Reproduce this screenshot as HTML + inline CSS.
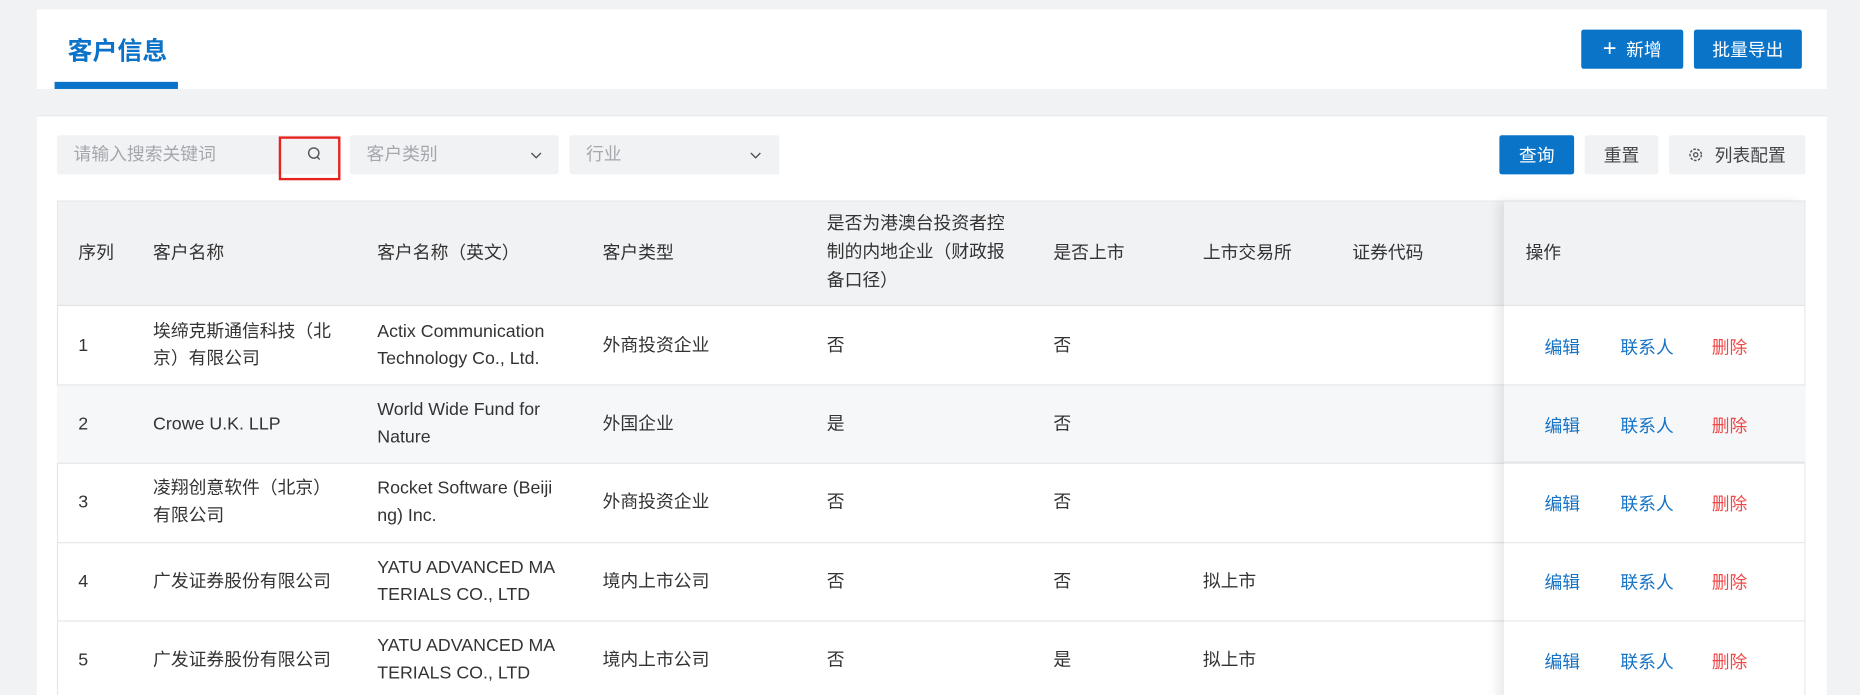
<!DOCTYPE html>
<html><head><meta charset="utf-8">
<style>
*{box-sizing:border-box;margin:0;padding:0}
html,body{width:1860px;height:695px;overflow:hidden;background:#f1f2f4}
#w{position:absolute;left:0;top:0;width:1568px;height:586px;overflow:hidden;transform:scale(1.18622);transform-origin:0 0;font-family:"Liberation Sans","Noto Sans CJK SC",sans-serif;color:#333;font-size:15px}
.a{position:absolute}
.card{background:#fff}
.btn{position:absolute;background:#0a74c9;color:#fff;border-radius:2px;display:flex;align-items:center;justify-content:center;font-size:15px}
.gb{position:absolute;background:#f1f2f4;color:#444;border-radius:2px;display:flex;align-items:center;justify-content:center;font-size:15px}
.inp{position:absolute;background:#f1f2f4;border-radius:2px;color:#a4a7ad;font-size:15px;line-height:33px;padding-left:14px}
.t{position:absolute;white-space:nowrap;line-height:23px}
.row{position:absolute;left:48px;width:1474px;border-bottom:1px solid #e4e6ea}
.lk{position:absolute;color:#1673c6}
.dl{position:absolute;color:#f04848}
</style></head><body><div id="w">
<div class="a card" style="left:31px;top:8px;width:1509px;height:67px"></div>
<div class="a" style="left:57px;top:27px;font-size:21px;font-weight:bold;color:#0a72c8">客户信息</div>
<div class="a" style="left:46px;top:69px;width:104px;height:6px;background:#0a72c8"></div>
<div class="btn" style="left:1333px;top:25px;width:86px;height:33px"><span style="font-size:20px;margin-right:8px;font-weight:300">+</span>新增</div>
<div class="btn" style="left:1428px;top:25px;width:91px;height:33px">批量导出</div>

<div class="a card" style="left:31px;top:97px;width:1509px;height:600px;border-top:1px solid #e6e8eb"></div>
<div class="inp" style="left:48px;top:114px;width:239px;height:33px">请输入搜索关键词</div>
<svg class="a" style="left:258px;top:123px" width="14" height="14" viewBox="0 0 14 14"><circle cx="6.5" cy="6" r="4.3" fill="none" stroke="#555" stroke-width="1.2"/><path d="M9.5 9.5L11.5 11.5" stroke="#555" stroke-width="1.2"/></svg>
<div class="a" style="left:235px;top:115px;width:52px;height:37px;border:2px solid #e8231f"></div>
<div class="inp" style="left:295px;top:114px;width:176px;height:33px">客户类别</div>
<svg class="a" style="left:447px;top:127px" width="10" height="8"><path d="M1 2L5 6L9 2" fill="none" stroke="#555" stroke-width="1.2"/></svg>
<div class="inp" style="left:480px;top:114px;width:177px;height:33px">行业</div>
<svg class="a" style="left:632px;top:127px" width="10" height="8"><path d="M1 2L5 6L9 2" fill="none" stroke="#555" stroke-width="1.2"/></svg>
<div class="btn" style="left:1264px;top:114px;width:63px;height:33px">查询</div>
<div class="gb" style="left:1336px;top:114px;width:62px;height:33px">重置</div>
<div class="gb" style="left:1407px;top:114px;width:115px;height:33px"><svg width="13" height="13" viewBox="0 0 13 13" style="margin-right:9px"><circle cx="6.5" cy="6.5" r="4.8" fill="none" stroke="#555" stroke-width="1.2" stroke-dasharray="2.2 1.2"/><circle cx="6.5" cy="6.5" r="1.8" fill="none" stroke="#555" stroke-width="1.1"/></svg>列表配置</div>

<div class="a" style="left:48px;top:169px;width:1474px;height:500px;border:1px solid #e4e6ea;border-bottom:none"></div>
<div class="a" style="left:49px;top:170px;width:1472px;height:88px;background:#f1f2f4;border-bottom:1px solid #e1e3e7"></div>
<div class="t" style="left:66px;top:202px">序列</div>
<div class="t" style="left:129px;top:202px">客户名称</div>
<div class="t" style="left:318px;top:202px">客户名称（英文）</div>
<div class="t" style="left:508px;top:202px">客户类型</div>
<div class="t" style="left:697px;top:177px;white-space:normal;width:160px;line-height:24px">是否为港澳台投资者控制的内地企业（财政报备口径）</div>
<div class="t" style="left:888px;top:202px">是否上市</div>
<div class="t" style="left:1014px;top:202px">上市交易所</div>
<div class="t" style="left:1140px;top:202px">证券代码</div>

<div class="row" style="top:258px;height:67px"></div>
<div class="row" style="top:325px;height:66px;background:#f6f7f9"></div>
<div class="row" style="top:391px;height:67px"></div>
<div class="row" style="top:458px;height:66px"></div>
<div class="row" style="top:524px;height:80px;border-bottom:none"></div>

<div class="t" style="left:66px;top:280px">1</div>
<div class="t" style="left:129px;top:268px">埃缔克斯通信科技（北<br>京）有限公司</div>
<div class="t" style="left:318px;top:268px">Actix Communication<br>Technology Co., Ltd.</div>
<div class="t" style="left:508px;top:280px">外商投资企业</div>
<div class="t" style="left:697px;top:280px">否</div>
<div class="t" style="left:888px;top:280px">否</div>

<div class="t" style="left:66px;top:346px">2</div>
<div class="t" style="left:129px;top:346px">Crowe U.K. LLP</div>
<div class="t" style="left:318px;top:334px">World Wide Fund for<br>Nature</div>
<div class="t" style="left:508px;top:346px">外国企业</div>
<div class="t" style="left:697px;top:346px">是</div>
<div class="t" style="left:888px;top:346px">否</div>

<div class="t" style="left:66px;top:412px">3</div>
<div class="t" style="left:129px;top:400px">凌翔创意软件（北京）<br>有限公司</div>
<div class="t" style="left:318px;top:400px">Rocket Software (Beiji<br>ng) Inc.</div>
<div class="t" style="left:508px;top:412px">外商投资企业</div>
<div class="t" style="left:697px;top:412px">否</div>
<div class="t" style="left:888px;top:412px">否</div>

<div class="t" style="left:66px;top:479px">4</div>
<div class="t" style="left:129px;top:479px">广发证券股份有限公司</div>
<div class="t" style="left:318px;top:467px">YATU ADVANCED MA<br>TERIALS CO., LTD</div>
<div class="t" style="left:508px;top:479px">境内上市公司</div>
<div class="t" style="left:697px;top:479px">否</div>
<div class="t" style="left:888px;top:479px">否</div>
<div class="t" style="left:1014px;top:479px">拟上市</div>

<div class="t" style="left:66px;top:545px">5</div>
<div class="t" style="left:129px;top:545px">广发证券股份有限公司</div>
<div class="t" style="left:318px;top:533px">YATU ADVANCED MA<br>TERIALS CO., LTD</div>
<div class="t" style="left:508px;top:545px">境内上市公司</div>
<div class="t" style="left:697px;top:545px">否</div>
<div class="t" style="left:888px;top:545px">是</div>
<div class="t" style="left:1014px;top:545px">拟上市</div>

<div class="a" style="left:1268px;top:170px;width:253px;height:500px;box-shadow:-6px 0 8px rgba(0,0,0,0.08)"></div>
<div class="a" style="left:1268px;top:170px;width:253px;height:88px;background:#f1f2f4;border-bottom:1px solid #e1e3e7"></div>
<div class="a" style="left:1268px;top:258px;width:253px;height:67px;background:#fff;border-bottom:1px solid #e4e6ea"></div>
<div class="a" style="left:1268px;top:325px;width:253px;height:66px;background:#f6f7f9;border-bottom:2px solid #e4e6ea"></div>
<div class="a" style="left:1268px;top:391px;width:253px;height:67px;background:#fff;border-bottom:1px solid #e4e6ea"></div>
<div class="a" style="left:1268px;top:458px;width:253px;height:66px;background:#fff;border-bottom:1px solid #e4e6ea"></div>
<div class="a" style="left:1268px;top:524px;width:253px;height:150px;background:#fff"></div>
<div class="t" style="left:1286px;top:202px">操作</div>
<div class="lk" style="left:1302px;top:282px">编辑</div><div class="lk" style="left:1366px;top:282px">联系人</div><div class="dl" style="left:1443px;top:282px">删除</div>
<div class="lk" style="left:1302px;top:348px">编辑</div><div class="lk" style="left:1366px;top:348px">联系人</div><div class="dl" style="left:1443px;top:348px">删除</div>
<div class="lk" style="left:1302px;top:414px">编辑</div><div class="lk" style="left:1366px;top:414px">联系人</div><div class="dl" style="left:1443px;top:414px">删除</div>
<div class="lk" style="left:1302px;top:480px">编辑</div><div class="lk" style="left:1366px;top:480px">联系人</div><div class="dl" style="left:1443px;top:480px">删除</div>
<div class="lk" style="left:1302px;top:547px">编辑</div><div class="lk" style="left:1366px;top:547px">联系人</div><div class="dl" style="left:1443px;top:547px">删除</div>
</div></body></html>
